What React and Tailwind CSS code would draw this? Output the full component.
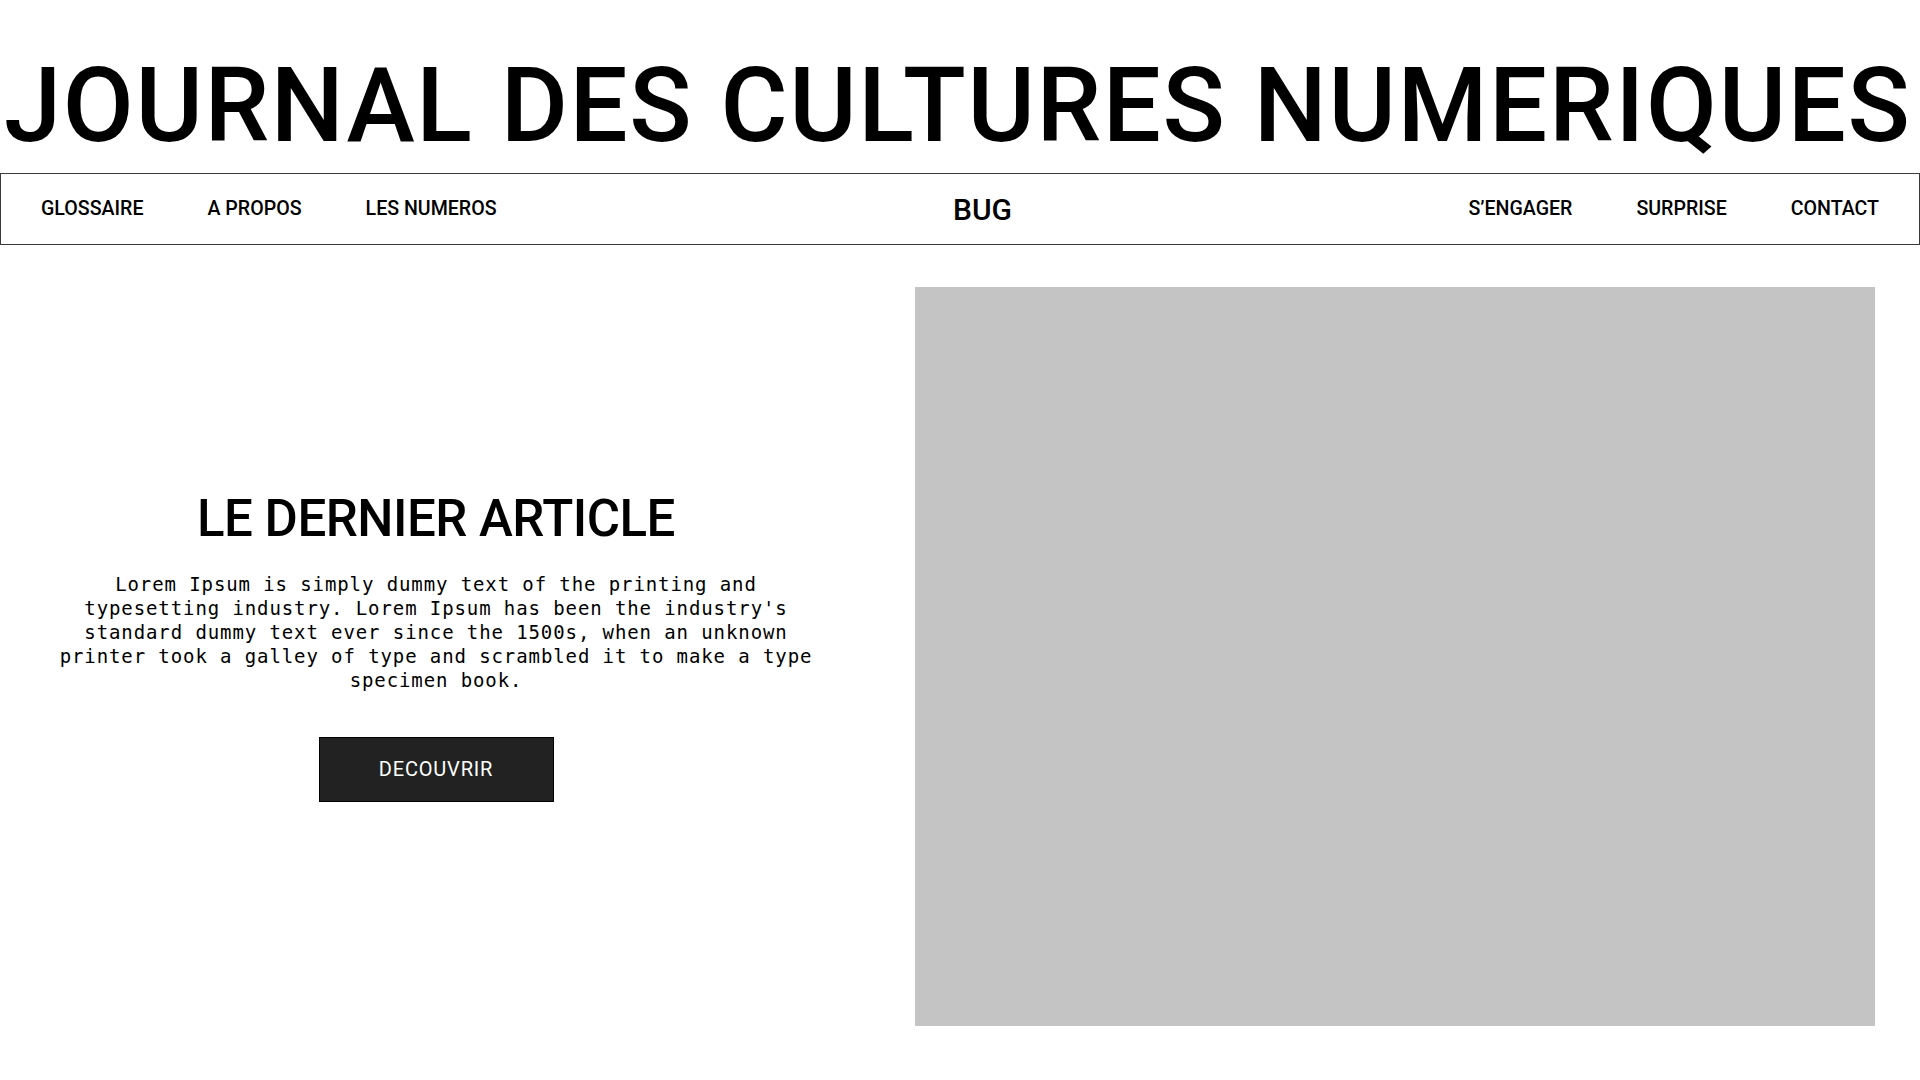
import React from "react";

const leftLinks = ["GLOSSAIRE", "A PROPOS", "LES NUMEROS"];
const rightLinks = ["S’ENGAGER", "SURPRISE", "CONTACT"];

const sans = "font-['Roboto','Liberation_Sans',sans-serif]";
const mono = "font-['DejaVu_Sans_Mono','Liberation_Mono',monospace]";

function NavBar() {
  return (
    <nav className={`h-[72px] border border-[#3b3b3b] flex items-center justify-between px-10 ${sans}`}>
      <ul className="flex gap-16 text-[19.6px] font-medium text-black">
        {leftLinks.map((l) => (
          <li key={l}>
            <a href="#">{l}</a>
          </li>
        ))}
      </ul>
      <a href="#" className="text-[30px] font-medium text-black">
        BUG
      </a>
      <ul className="flex gap-16 text-[19.6px] font-medium text-black">
        {rightLinks.map((l) => (
          <li key={l}>
            <a href="#">{l}</a>
          </li>
        ))}
      </ul>
    </nav>
  );
}

export default function App() {
  return (
    <div className="w-[1920px] min-h-[1080px] bg-white text-black">
      <header className="pt-[54px]">
        <h1 className={`${sans} text-[103px] font-medium leading-none tracking-[1.6px] whitespace-nowrap px-[4px] mb-4`}>
          JOURNAL DES CULTURES NUMERIQUES
        </h1>
        <NavBar />
      </header>

      <main className="flex pt-[42px]">
        <section className="w-[872px] flex flex-col items-center justify-center pb-[22px]">
          <h2 className={`${sans} text-[51px] font-medium leading-none tracking-[-0.5px] pt-[3px]`}>LE DERNIER ARTICLE</h2>
          <p className={`${mono} mt-[28px] w-[770px] text-center text-[19px] leading-6 tracking-[0.9px]`}>
            Lorem Ipsum is simply dummy text of the printing and typesetting industry. Lorem Ipsum has been the
            industry's standard dummy text ever since the 1500s, when an unknown printer took a galley of type and
            scrambled it to make a type specimen book.
          </p>
          <button className={`${sans} mt-[45px] w-[235px] h-[65px] bg-[#222222] border border-black text-white text-[20px] tracking-[0.8px]`}>
            DECOUVRIR
          </button>
        </section>
        <div className="ml-[43px] w-[960px] h-[739px] bg-[#c4c4c4]" />
      </main>
    </div>
  );
}
